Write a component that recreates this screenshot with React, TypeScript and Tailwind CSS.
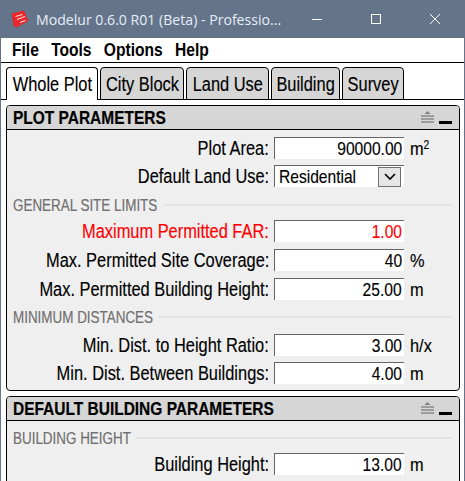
const sans = "font-['Liberation_Sans',sans-serif]";
const narrow = `inline-block shrink-0 whitespace-nowrap ${sans}`;

function Logo() {
  return (
    <svg width="18" height="18" viewBox="0 0 18 18" className="shrink-0">
      <path d="M0.5 3.5 L13 0.5 L17.5 11 L5.5 17.5 L2.5 15.5 Z" fill="#e8272c" />
      <path d="M4.5 6.5 L11.5 4.5 M6 9.5 L14 6.5 M9 12.5 L14.5 10.5" stroke="#ffd9d9" strokeWidth="1.2" fill="none" />
    </svg>
  );
}

function PanelIcons() {
  return (
    <div className="flex items-end gap-[5px]">
      <svg width="13" height="14" viewBox="0 0 13 14">
        <path d="M6.5 0 L9.5 3 L3.5 3 Z" fill="#808080" />
        <path d="M0 5 H13 M0 8 H13 M0 11 H13" stroke="#8a8a8a" strokeWidth="1.5" />
      </svg>
      <div className="w-[13px] h-[3px] bg-black mb-[1px]" />
    </div>
  );
}

function Panel({ title, children }: { title: string; children: React.ReactNode }) {
  return (
    <div className="border border-black rounded-[4px] overflow-hidden bg-[#efefef] shrink-0">
      <div className="h-[24px] bg-[#d6d6d6] border-b border-black flex items-center justify-between pl-[6px] pr-[7px]">
        <span className={`${narrow} text-[18px] leading-none font-bold text-black scale-x-[0.86] origin-left [-webkit-text-stroke:0.2px]`}>{title}</span>
        <PanelIcons />
      </div>
      {children}
    </div>
  );
}

function Section({ title, width }: { title: string; width: string }) {
  return (
    <div className="flex items-center h-[18px] pt-[2px] pl-[6px] pr-[7px] gap-[7px]">
      <div className={`${width} flex`}>
        <span className={`${narrow} text-[17px] leading-none text-[#707070] scale-x-[0.79] origin-left [-webkit-text-stroke:0.2px]`}>{title}</span>
      </div>
      <div className="flex-1 h-[2px] bg-[#e3e3e3]" />
    </div>
  );
}

function Label({ text, red }: { text: string; red?: boolean }) {
  return (
    <div className="w-[267px] pr-[5px] flex justify-end">
      <span className={`${narrow} text-[20px] leading-none scale-x-[0.82] origin-right [-webkit-text-stroke:0.15px] ${red ? "text-[#ff0000]" : "text-black"}`}>{text}</span>
    </div>
  );
}

function Row({ label, value, unit, red, sup, mb }: { label: string; value: string; unit?: string; red?: boolean; sup?: boolean; mb: string }) {
  return (
    <div className={`flex items-center h-[22px] ${mb}`}>
      <Label text={label} red={red} />
      <div className="w-[130px] h-[22px] bg-white border-t border-l border-[#646464] flex items-center justify-end pr-[2px]">
        <span className={`${narrow} text-[19px] leading-none scale-x-[0.82] origin-right [-webkit-text-stroke:0.15px] ${red ? "text-[#ff0000]" : "text-black"}`}>{value}</span>
      </div>
      {unit && (
        <span className={`${narrow} ml-[6px] text-[19px] leading-none text-black scale-x-[0.86] origin-left [-webkit-text-stroke:0.15px]`}>
          {unit}
          {sup && <span className="text-[12px] align-[6px]">2</span>}
        </span>
      )}
    </div>
  );
}

function SelectRow() {
  return (
    <div className="flex items-center h-[22px] mb-[8px]">
      <Label text="Default Land Use:" />
      <div className="w-[130px] h-[22px] bg-white border-t border-l border-[#646464] flex items-center justify-between pl-[4px] pr-[3px]">
        <div className="flex w-[76px]">
          <span className={`${narrow} text-[19px] leading-none text-black scale-x-[0.82] origin-left [-webkit-text-stroke:0.15px]`}>Residential</span>
        </div>
        <div className="w-[23px] h-[20px] bg-[#e6e6e6] border border-[#707070] flex items-center justify-center">
          <svg width="12" height="8" viewBox="0 0 12 8">
            <path d="M1 1 L6 6 L11 1" stroke="#000" strokeWidth="1.6" fill="none" />
          </svg>
        </div>
      </div>
    </div>
  );
}

const tabs = ["Whole Plot", "City Block", "Land Use", "Building", "Survey"];
const tabWidths = ["w-[92px]", "w-[84px]", "w-[83px]", "w-[69px]", "w-[62px]"];

export default function App() {
  return (
    <div className="w-[465px] h-[481px] overflow-hidden bg-[#64748a] flex flex-col">
      <div className="h-[38px] shrink-0 flex items-center pl-[11px] pr-[24px] text-[#e6eef7]">
        <Logo />
        <span className="ml-[7px] inline-block whitespace-nowrap text-[15px] leading-none font-['Open_Sans',sans-serif] scale-x-[0.94] origin-left">
          Modelur 0.6.0 R01 (Beta) - Professio...
        </span>
        <div className="ml-auto flex items-center gap-[47px]">
          <svg width="12" height="12" viewBox="0 0 12 12">
            <path d="M1 6.5 H11" stroke="#fff" strokeWidth="1" />
          </svg>
          <svg width="12" height="12" viewBox="0 0 12 12">
            <rect x="1.5" y="1.5" width="9" height="9" stroke="#fff" fill="none" />
          </svg>
          <svg width="12" height="12" viewBox="0 0 12 12">
            <path d="M1 1 L11 11 M11 1 L1 11" stroke="#fff" strokeWidth="1" />
          </svg>
        </div>
      </div>
      <div className="flex-1 mx-[1px] flex flex-col bg-white min-h-0">
        <div className="h-[25px] shrink-0 border-b border-black flex items-center pl-[11px] pb-[2px]">
          <div className={`flex gap-[15px] whitespace-nowrap text-[19px] leading-none font-bold text-black scale-x-[0.82] origin-left ${sans}`}>
            <span>File</span>
            <span>Tools</span>
            <span>Options</span>
            <span>Help</span>
          </div>
        </div>
        <div className="h-[37px] shrink-0 flex items-end pl-[5px] gap-[2px] relative">
          <div className="absolute left-0 right-0 bottom-0 h-px bg-black" />
          {tabs.map((t, i) => (
            <div
              key={t}
              className={`${tabWidths[i]} h-[33px] relative flex items-center justify-center border border-black rounded-t-[4px] ${i === 0 ? "bg-white border-b-0" : "bg-[#d6d6d6]"}`}
            >
              <span className={`${narrow} text-[20px] leading-none text-black scale-x-[0.82] [-webkit-text-stroke:0.15px]`}>{t}</span>
            </div>
          ))}
        </div>
        <div className="flex-1 bg-white pl-[5px] pr-[4px] pt-[5px] flex flex-col gap-[5px] min-h-0">
          <Panel title="PLOT PARAMETERS">
            <div className="pt-[7px] pb-[6px]">
              <Row label="Plot Area:" value="90000.00" unit="m" sup mb="mb-[6px]" />
              <SelectRow />
              <Section title="GENERAL SITE LIMITS" width="w-[143px]" />
              <div className="h-[7px]" />
              <Row label="Maximum Permitted FAR:" value="1.00" red mb="mb-[7px]" />
              <Row label="Max. Permitted Site Coverage:" value="40" unit="%" mb="mb-[7px]" />
              <Row label="Max. Permitted Building Height:" value="25.00" unit="m" mb="mb-[7px]" />
              <Section title="MINIMUM DISTANCES" width="w-[139px]" />
              <div className="h-[9px]" />
              <Row label="Min. Dist. to Height Ratio:" value="3.00" unit="h/x" mb="mb-[6px]" />
              <Row label="Min. Dist. Between Buildings:" value="4.00" unit="m" mb="mb-0" />
            </div>
          </Panel>
          <Panel title="DEFAULT BUILDING PARAMETERS">
            <div className="pt-[7px] pb-[10px]">
              <Section title="BUILDING HEIGHT" width="w-[116px]" />
              <div className="h-[7px]" />
              <Row label="Building Height:" value="13.00" unit="m" mb="mb-[6px]" />
            </div>
          </Panel>
        </div>
      </div>
    </div>
  );
}
